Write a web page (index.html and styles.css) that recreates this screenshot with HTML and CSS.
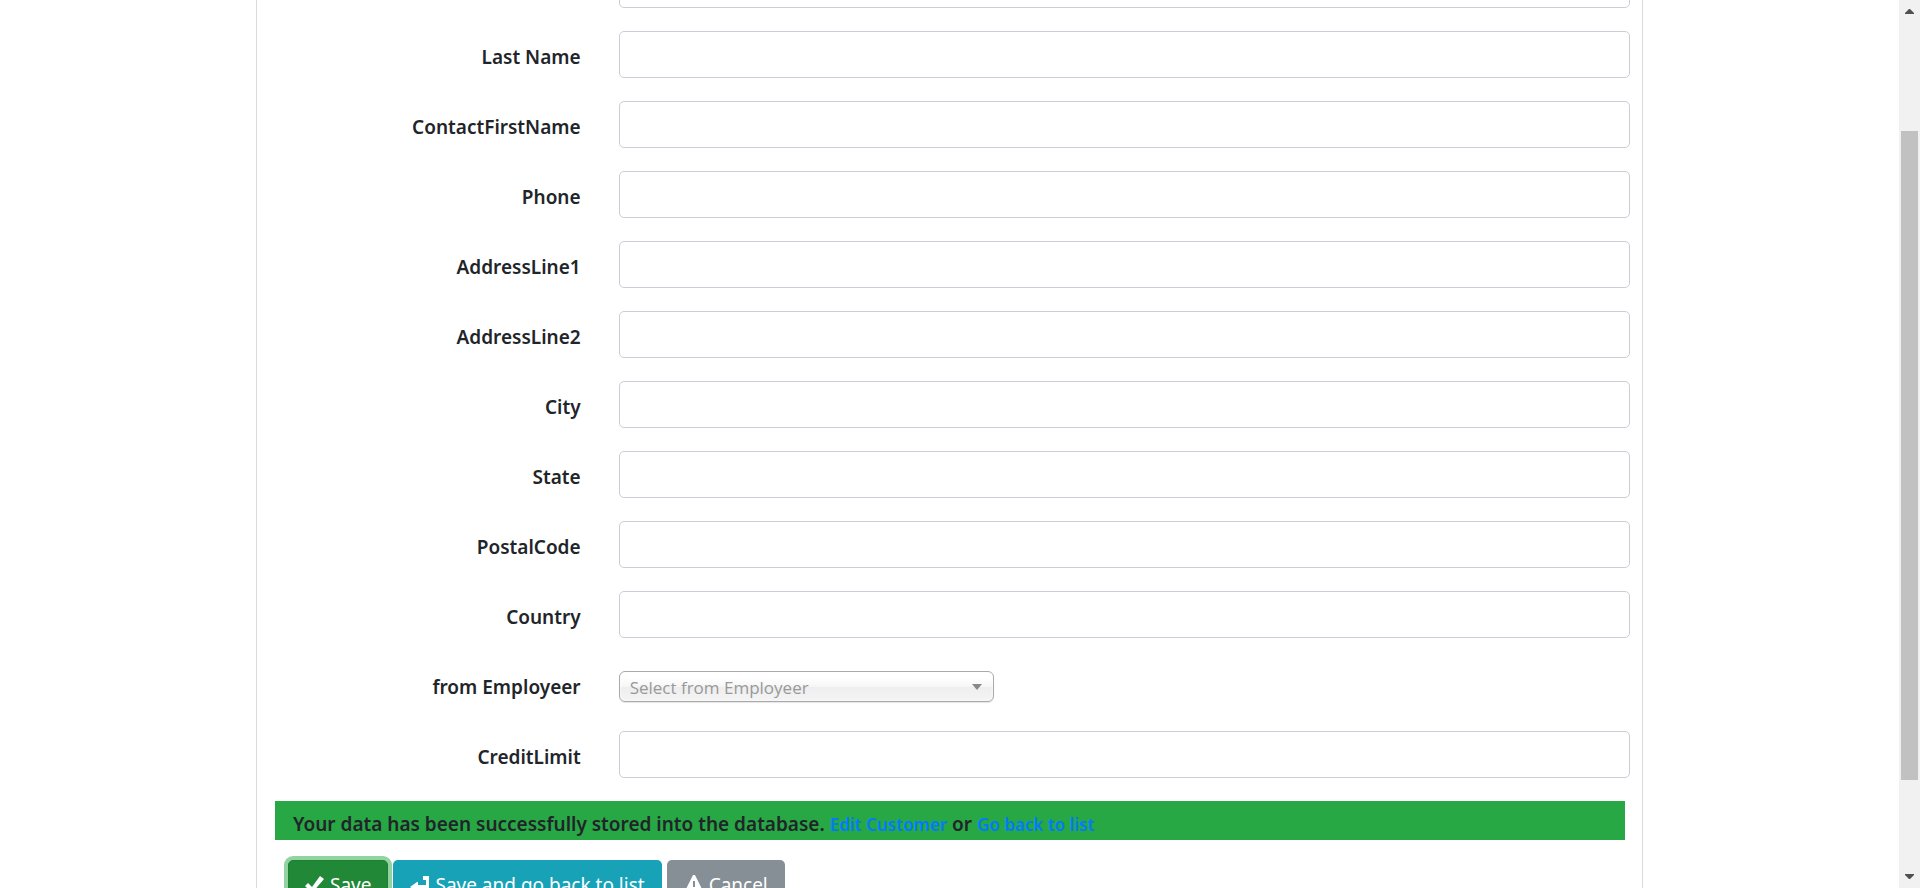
FILE: index.html
```
<!DOCTYPE html>
<html lang="en">
<head>
<meta charset="utf-8">
<title>Add Customer</title>
<link rel="stylesheet" href="styles.css">
</head>
<body>
<main class="page">
  <form class="card">
    <div class="row"><span class="label"></span><input class="field" type="text" aria-label="Customer Name"></div>
    <div class="row"><label class="label" for="last">Last Name</label><input class="field" id="last" type="text"></div>
    <div class="row"><label class="label" for="first">ContactFirstName</label><input class="field" id="first" type="text"></div>
    <div class="row"><label class="label" for="phone">Phone</label><input class="field" id="phone" type="text"></div>
    <div class="row"><label class="label" for="address1">AddressLine1</label><input class="field" id="address1" type="text"></div>
    <div class="row"><label class="label" for="address2">AddressLine2</label><input class="field" id="address2" type="text"></div>
    <div class="row"><label class="label" for="city">City</label><input class="field" id="city" type="text"></div>
    <div class="row"><label class="label" for="state">State</label><input class="field" id="state" type="text"></div>
    <div class="row"><label class="label" for="postal">PostalCode</label><input class="field" id="postal" type="text"></div>
    <div class="row"><label class="label" for="country">Country</label><input class="field" id="country" type="text"></div>
    <div class="row"><label class="label" for="employee">from Employeer</label>
      <div class="select-wrap"><select class="select" id="employee"><option>Select from Employeer</option></select></div>
    </div>
    <div class="row"><label class="label" for="credit">CreditLimit</label><input class="field" id="credit" type="text"></div>
    <p class="success" role="status">Your data has been successfully stored into the database. <a class="link" href="#edit">Edit Customer</a> or <a class="link" href="#list">Go back to list</a></p>
    <div class="actions">
      <button class="btn btn-save" type="button"><svg class="icon" viewBox="0 0 20 20" aria-hidden="true"><path d="M0 11l3-3 4 4L15 1l4 3L7 18z"/></svg>Save</button>
      <button class="btn btn-back" type="button"><svg class="icon" viewBox="0 0 20 20" aria-hidden="true"><path d="M13 1h6v13H8v4L0 12l7-5h1v3h8V5h-3z"/></svg>Save and go back to list</button>
      <button class="btn btn-cancel" type="button"><svg class="icon" viewBox="0 0 20 20" aria-hidden="true"><path fill-rule="evenodd" d="M9 0h2l9 18H0zM9 6v6h2V6zM9 14v2h2v-2z"/></svg>Cancel</button>
    </div>
  </form>
</main>
<div class="scrollbar" aria-hidden="true">
  <svg class="arrow" viewBox="0 0 9 5"><path d="M4 0h1l4 4v1H0V4z"/></svg>
  <div class="track"><div class="thumb"></div></div>
  <svg class="arrow" viewBox="0 0 9 5"><path d="M0 0h9v1L5 5H4L0 1z"/></svg>
</div>
</body>
</html>
```
FILE: styles.css
```
* { box-sizing: border-box; }
body {
  margin: 0;
  display: flex;
  height: 100vh;
  overflow: hidden;
  background: #fff;
  color: #212529;
  font-family: "Noto Sans", "Open Sans", sans-serif;
  font-size: 19px;
  line-height: 30px;
}
.page {
  flex: 1;
  height: 100vh;
  overflow: hidden;
  padding: 0 256px;
}
/* The form is shown scrolled to its lower part. */
.card {
  margin-top: -39px;
  border: 1px solid #d8dadd;
  border-top: 0;
  padding-bottom: 40px;
}
.row {
  display: grid;
  grid-template-columns: 8fr 25fr;
  column-gap: 38px;
  align-items: start;
  height: 70px;
  padding-right: 12px;
}
.label {
  padding-top: 11px;
  text-align: right;
  font-weight: 600;
}
.field {
  width: 100%;
  height: 47px;
  padding: 8px 15px;
  border: 1px solid #cbced6;
  border-radius: 5px;
  background: #fff;
  font: inherit;
  color: #495057;
}
.select-wrap {
  position: relative;
  width: 375px;
  margin-top: 10px;
  height: 31px;
}
.select {
  display: block;
  width: 100%;
  height: 31px;
  padding: 1px 10px 0;
  border: 1px solid #aaa;
  border-radius: 6px;
  appearance: none;
  background: linear-gradient(#fff 20%, #f6f6f6 50%, #eee 52%, #f4f4f4 100%);
  box-shadow: 0 0 3px #fff inset, 0 1px 1px rgba(0, 0, 0, .1);
  color: #999;
  font-family: "Open Sans", sans-serif;
  font-size: 17px;
}
.select-wrap::after {
  content: "";
  position: absolute;
  right: 12px;
  top: 13px;
  border: 5px solid transparent;
  border-top: 6px solid #888;
  border-bottom: 0;
}
.success {
  margin: 0 17px 0 18px;
  padding: 8px 18px 1px;
  background: #28a745;
  font-weight: 600;
}
.link {
  color: #007bff;
  font-size: 17px;
  line-height: 24px;
  text-decoration: none;
}
.actions {
  display: flex;
  gap: 5px;
  padding: 20px 31px 0;
}
.btn {
  display: flex;
  align-items: center;
  gap: 5px;
  height: 50px;
  padding: 0 16px;
  border: 1px solid transparent;
  border-radius: 5px;
  color: #fff;
  font-family: inherit;
  font-size: 19px;
}
.btn-save {
  background: #218838;
  border-color: #1e7e34;
  box-shadow: 0 0 0 4px #93d3a2;
}
.btn-back { background: #17a2b8; }
.btn-cancel { background: #868e96; }
.icon {
  width: 20px;
  height: 20px;
  fill: currentColor;
}
.scrollbar {
  display: flex;
  flex-direction: column;
  align-items: center;
  width: 21px;
  padding: 9px 0;
  background: #f1f1f1;
}
.arrow {
  width: 9px;
  height: 5px;
  fill: #505050;
}
.track {
  flex: 1;
  width: 17px;
  padding: 117px 0 94px;
}
.thumb {
  height: 100%;
  background: #c1c1c1;
}
```
